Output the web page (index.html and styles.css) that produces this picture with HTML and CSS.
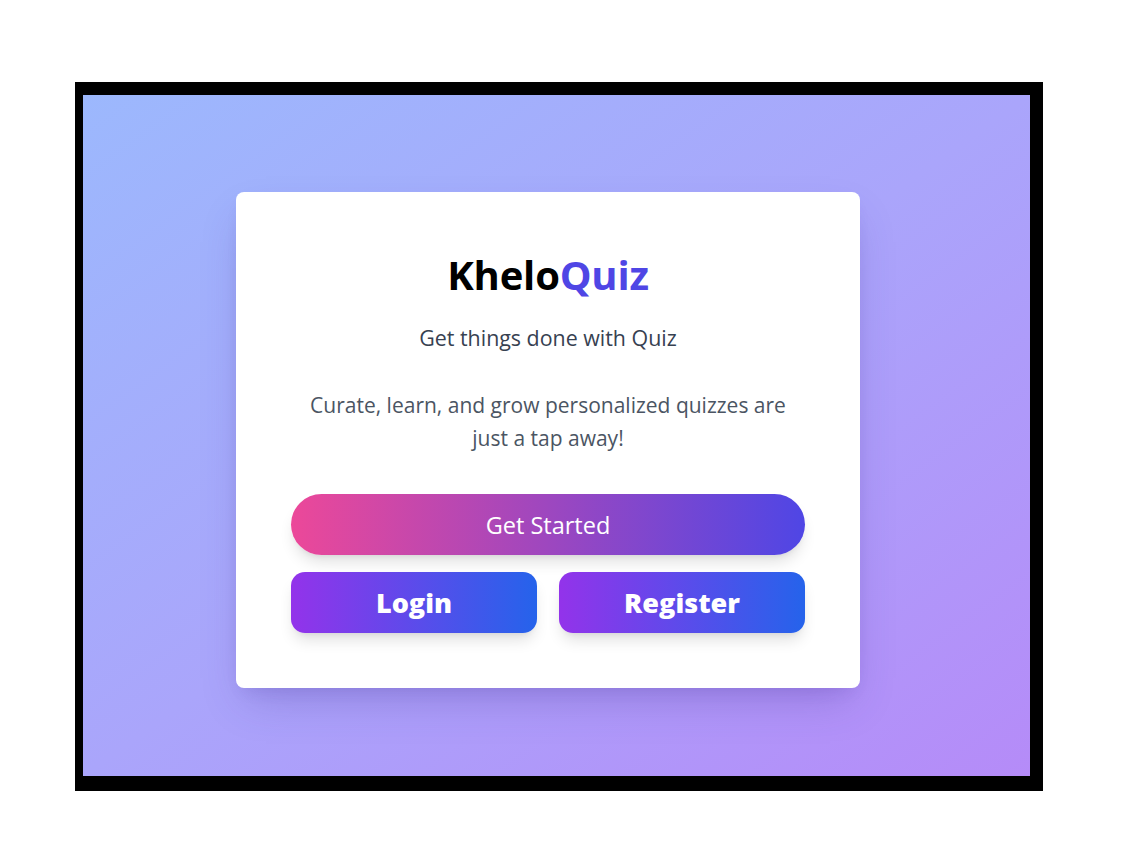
FILE: index.html
```html
<!DOCTYPE html>
<html lang="en">
<head>
<meta charset="utf-8">
<title>KheloQuiz</title>
<link rel="stylesheet" href="styles.css">
</head>
<body>
  <div class="frame">
    <main class="stage">
      <section class="card">
        <h1 class="brand">Khelo<span class="brand-accent">Quiz</span></h1>
        <p class="tagline">Get things done with Quiz</p>
        <p class="blurb">Curate, learn, and grow personalized quizzes are<br>just a tap away!</p>
        <button class="btn-start">Get Started</button>
        <div class="btn-row">
          <button class="btn-auth">Login</button>
          <button class="btn-auth">Register</button>
        </div>
      </section>
    </main>
  </div>
</body>
</html>
```

FILE: styles.css
```css
* { box-sizing: border-box; }
html, body { margin: 0; padding: 0; background: #ffffff; }
body {
  width: 1128px;
  height: 856px;
  padding: 82px 0 0 75px;
  font-family: "Open Sans", "Noto Sans", sans-serif;
}
.frame {
  width: 968px;
  height: 709px;
  background: #000;
  border-style: solid;
  border-color: #000;
  border-width: 13px 13px 15px 8px;
}
.stage {
  width: 947px;
  height: 681px;
  background: linear-gradient(to bottom right, #9cb8fd 0%, #aaa5fb 50%, #b58bf8 100%);
  padding: 97px 0 0 153px;
}
.card {
  width: 624px;
  height: 496px;
  background: #fff;
  border-radius: 8px;
  box-shadow: 0 20px 40px -10px rgba(60, 40, 140, 0.25), 0 8px 16px -8px rgba(60, 40, 140, 0.15);
  padding: 60px 55px 0 55px;
  display: flex;
  flex-direction: column;
  align-items: center;
  text-align: center;
}
.brand {
  margin: 0;
  font-size: 40px;
  line-height: 46px;
  font-weight: 700;
  color: #000;
  letter-spacing: -0.2px;
}
.brand-accent { color: #4f46e5; }
.tagline {
  margin: 26px 0 0;
  font-size: 21.4px;
  line-height: 28px;
  color: #374151;
}
.blurb {
  margin: 37px 0 0;
  font-size: 21px;
  line-height: 33px;
  color: #4b5563;
  white-space: nowrap;
}
.btn-start {
  margin-top: 39px;
  width: 514px;
  height: 61px;
  border: none;
  border-radius: 999px;
  background: linear-gradient(to right, #ec4899, #4f46e5);
  color: #fff;
  font-family: inherit;
  font-size: 23.5px;
  font-weight: 400;
  box-shadow: 0 10px 15px -3px rgba(0,0,0,0.12), 0 4px 6px -4px rgba(0,0,0,0.1);
}
.btn-row {
  margin-top: 17px;
  width: 514px;
  display: flex;
  gap: 22px;
}
.btn-auth {
  flex: 1;
  height: 61px;
  border: none;
  border-radius: 14px;
  background: linear-gradient(to right, #9333ea, #2563eb);
  color: #fff;
  font-family: "Open Sans", sans-serif;
  font-size: 27px;
  font-weight: 800;
  padding: 0;
  box-shadow: 0 10px 15px -3px rgba(0,0,0,0.12), 0 4px 6px -4px rgba(0,0,0,0.1);
}
```
